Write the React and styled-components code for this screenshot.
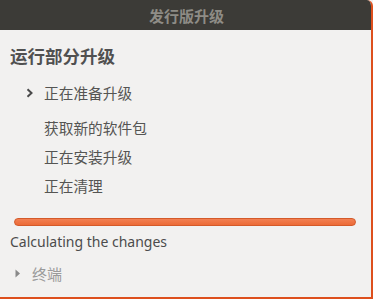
import React from 'react';
import styled, { createGlobalStyle } from 'styled-components';

const GlobalStyle = createGlobalStyle`
  html, body {
    margin: 0;
    padding: 0;
    background: #f2f1f0;
  }
  body {
    font-family: "Noto Sans", "Noto Sans CJK SC", sans-serif;
  }
`;

const steps = [
  { label: '正在准备升级', current: true },
  { label: '获取新的软件包' },
  { label: '正在安装升级' },
  { label: '正在清理' },
];

const App = () => (
  <>
    <GlobalStyle />
    <Window>
      <TitleBar>发行版升级</TitleBar>
      <Body>
        <Heading>运行部分升级</Heading>
        <Steps>
          {steps.map((step) => (
            <Step key={step.label} $current={step.current}>
              <Marker>
                {step.current && (
                  <svg width="8" height="10" viewBox="0 0 8 10">
                    <path d="M1.5 1.3 L5.5 5 L1.5 8.7" fill="none" stroke="#4a4a4a" strokeWidth="2" />
                  </svg>
                )}
              </Marker>
              {step.label}
            </Step>
          ))}
        </Steps>
        <Progress />
        <Status>Calculating the changes</Status>
        <Expander>
          <svg width="6" height="9" viewBox="0 0 6 9">
            <path d="M0.5 0.5 L5 4.5 L0.5 8.5 Z" fill="#8a8a8a" />
          </svg>
          终端
        </Expander>
      </Body>
    </Window>
  </>
);

const Window = styled.div`
  width: 373px;
  height: 299px;
  box-sizing: border-box;
  display: flex;
  flex-direction: column;
  background: #f2f1f0;
  border-right: 2px solid #dd4f1d;
  border-bottom: 2px solid #dd4f1d;
  border-top-right-radius: 6px;
  overflow: hidden;
`;

const TitleBar = styled.div`
  height: 30px;
  flex: none;
  display: flex;
  align-items: center;
  justify-content: center;
  background: #3c3b37;
  color: #8e8c86;
  font-family: "Noto Sans CJK SC", sans-serif;
  font-size: 15px;
  font-weight: bold;
  padding-left: 2px;
`;

const Body = styled.div`
  padding: 14px 15px 0 10px;
  display: flex;
  flex-direction: column;
  color: #4c4c4c;
  font-family: "Noto Sans CJK SC", sans-serif;
`;

const Heading = styled.div`
  height: 24px;
  line-height: 24px;
  font-size: 17.5px;
  font-weight: bold;
  color: #505050;
`;

const Steps = styled.div`
  margin-top: 10px;
  display: flex;
  flex-direction: column;
`;

const Step = styled.div`
  height: 29px;
  display: flex;
  align-items: center;
  font-size: 14.7px;
  color: #555553;
  margin-bottom: ${(p) => (p.$current ? '6px' : '0')};
`;

const Marker = styled.span`
  width: 34px;
  display: flex;
  justify-content: flex-end;
  padding-right: 10px;
  box-sizing: border-box;
`;

const Progress = styled.div`
  margin: 18px 0 0 4px;
  height: 8px;
  box-sizing: border-box;
  border: 1px solid #d45a2a;
  border-radius: 4px;
  background: linear-gradient(#f28052, #ec6b37);
`;

const Status = styled.div`
  margin-top: 7px;
  height: 18px;
  line-height: 18px;
  font-family: "Noto Sans", sans-serif;
  font-size: 14px;
  color: #4c4c4c;
`;

const Expander = styled.div`
  margin-top: 12px;
  height: 20px;
  display: flex;
  align-items: center;
  gap: 11px;
  padding-left: 5px;
  font-size: 15px;
  color: #9a9a9a;
`;

export default App;
